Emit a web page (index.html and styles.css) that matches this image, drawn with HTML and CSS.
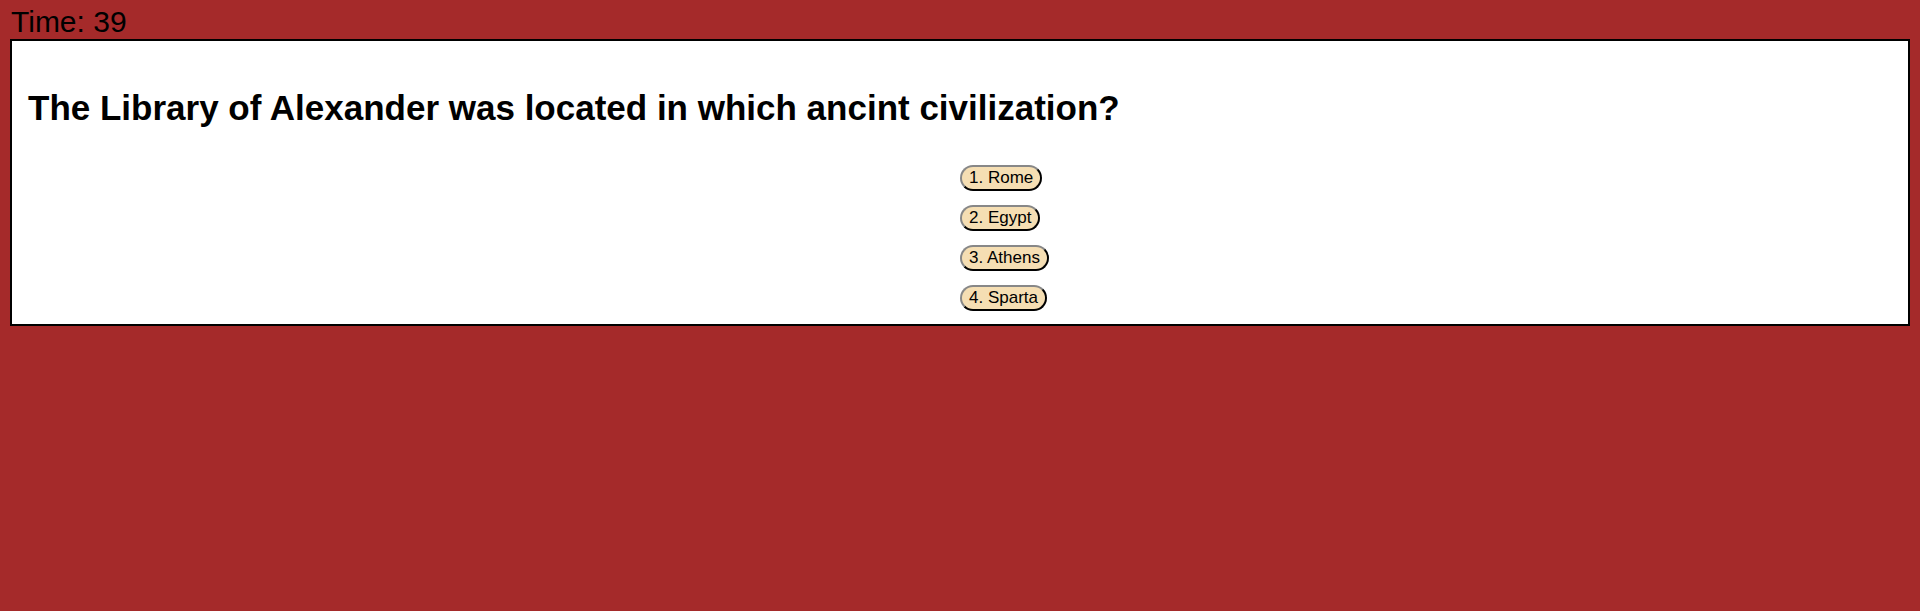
FILE: index.html
```html
<!DOCTYPE html>
<html>
<head>
<meta charset="utf-8">
<title>Quiz</title>
<link rel="stylesheet" href="styles.css">
</head>
<body>
<div class="timer">Time: 39</div>
<div class="card">
  <h2 class="question">The Library of Alexander was located in which ancint civilization?</h2>
  <div class="answers">
    <button class="answer">1. Rome</button>
    <button class="answer">2. Egypt</button>
    <button class="answer">3. Athens</button>
    <button class="answer">4. Sparta</button>
  </div>
</div>
</body>
</html>
```
FILE: styles.css
```css
html, body {
  margin: 0;
  background: #a52a2a;
}
body {
  padding: 0 10px;
  font-family: "Liberation Sans", Arial, sans-serif;
}
.timer {
  font-size: 30px;
  line-height: 34px;
  padding-top: 5px;
  padding-left: 1px;
  color: #000;
}
.card {
  background: #fff;
  border: 2px solid #000;
  padding: 47px 16px 13px;
}
.question {
  margin: 0;
  font-size: 35px;
  font-weight: bold;
  line-height: 40px;
}
.answers {
  display: flex;
  flex-direction: column;
  align-items: flex-start;
  gap: 14px;
  margin-top: 37px;
  padding-left: 50%;
}
.answer {
  font-family: "Liberation Sans", Arial, sans-serif;
  font-size: 17px;
  height: 26px;
  padding: 0 7px;
  background: #f5deb3;
  border: 2px outset #333;
  border-radius: 13px;
  color: #000;
}
```
